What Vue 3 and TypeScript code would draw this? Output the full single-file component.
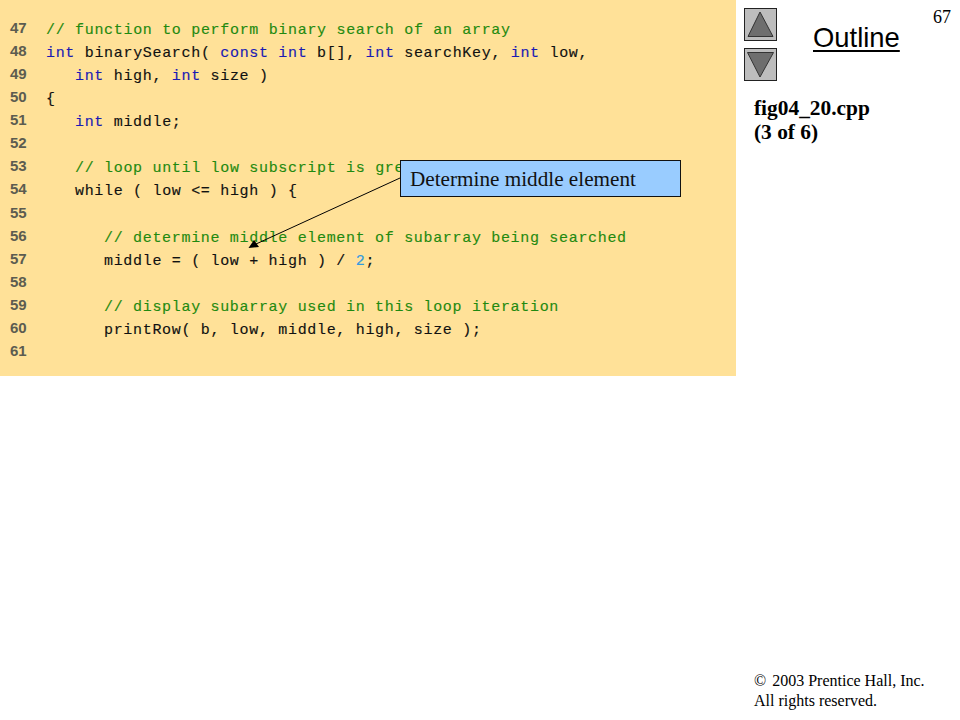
<script setup lang="ts">
type Seg = { t: string; c?: 'k' | 'g' | 'n' }
type Line = { n: number; indent: number; segs: Seg[] }
const lines: Line[] = [
  { n: 47, indent: 0, segs: [{ t: '// function to perform binary search of an array', c: 'g' }] },
  { n: 48, indent: 0, segs: [{ t: 'int', c: 'k' }, { t: ' binarySearch( ' }, { t: 'const int', c: 'k' }, { t: ' b[], ' }, { t: 'int', c: 'k' }, { t: ' searchKey, ' }, { t: 'int', c: 'k' }, { t: ' low,' }] },
  { n: 49, indent: 1, segs: [{ t: 'int', c: 'k' }, { t: ' high, ' }, { t: 'int', c: 'k' }, { t: ' size )' }] },
  { n: 50, indent: 0, segs: [{ t: '{' }] },
  { n: 51, indent: 1, segs: [{ t: 'int', c: 'k' }, { t: ' middle;' }] },
  { n: 52, indent: 0, segs: [] },
  { n: 53, indent: 1, segs: [{ t: '// loop until low subscript is greater than high subscript', c: 'g' }] },
  { n: 54, indent: 1, segs: [{ t: 'while ( low <= high ) {' }] },
  { n: 55, indent: 0, segs: [] },
  { n: 56, indent: 2, segs: [{ t: '// determine middle element of subarray being searched', c: 'g' }] },
  { n: 57, indent: 2, segs: [{ t: 'middle = ( low + high ) / ' }, { t: '2', c: 'n' }, { t: ';' }] },
  { n: 58, indent: 0, segs: [] },
  { n: 59, indent: 2, segs: [{ t: '// display subarray used in this loop iteration', c: 'g' }] },
  { n: 60, indent: 2, segs: [{ t: 'printRow( b, low, middle, high, size );' }] },
  { n: 61, indent: 0, segs: [] },
]
</script>

<template>
  <div class="slide">
    <main class="code">
      <div v-for="l in lines" :key="l.n" class="row">
        <span class="num">{{ l.n }}</span>
        <span class="src" :class="'ind' + l.indent"><span v-for="(s, i) in l.segs" :key="i" :class="s.c">{{ s.t }}</span></span>
      </div>
    </main>
    <aside class="side">
      <div class="top">
        <div class="nav">
          <button class="btn" aria-label="Previous">
            <svg width="31" height="31" viewBox="0 0 31 31"><path d="M15 3 L28 27.5 H3 Z" fill="#6e6e6e" stroke="#333" stroke-width="1" /></svg>
          </button>
          <button class="btn" aria-label="Next">
            <svg width="31" height="31" viewBox="0 0 31 31"><path d="M2.5 3.5 H28.5 L15 28 Z" fill="#6e6e6e" stroke="#333" stroke-width="1" /></svg>
          </button>
        </div>
        <div class="title">Outline</div>
        <div class="page">67</div>
      </div>
      <div class="file">fig04_20.cpp<br />(3 of 6)</div>
      <div class="copy"><span class="c">&copy;</span>2003 Prentice Hall, Inc.<br />All rights reserved.</div>
    </aside>
    <svg class="arrow" width="960" height="720" viewBox="0 0 960 720">
      <line x1="400" y1="178" x2="256" y2="244" stroke="#000" stroke-width="1" />
      <path d="M248.5 248 L254 240 L259 247 Z" fill="#000" />
    </svg>
    <div class="callout">Determine middle element</div>
  </div>
</template>

<style>
html, body { margin: 0; background: #fff; }
</style>

<style scoped>
.slide { position: relative; width: 960px; height: 720px; overflow: hidden; display: flex; background: #fff; }
.code { width: 736px; height: 376px; box-sizing: border-box; background: #ffe198; padding-top: 19px; flex: none; }
.row { display: flex; height: 23.07px; align-items: center; }
.num { width: 46px; box-sizing: border-box; padding-left: 10px; font: bold 15px/23px "Liberation Sans", sans-serif; color: #5c5c50; flex: none; margin-top: -6px; }
.src { font: 15px/23px "Liberation Mono", monospace; letter-spacing: 0.68px; white-space: pre; color: #111; -webkit-text-stroke: 0.15px currentColor; }
.ind1 { padding-left: 29px; }
.ind2 { padding-left: 58px; }
.k { color: #1a1ab4; }
.g { color: #1f8a10; }
.n { color: #2f9ae0; }
.side { flex: 1; position: relative; display: flex; flex-direction: column; padding: 8px 9px 9px 8px; box-sizing: border-box; font-family: "Liberation Serif", serif; color: #000; }
.top { display: flex; height: 88px; }
.nav { display: flex; flex-direction: column; gap: 7px; flex: none; }
.btn { width: 33px; height: 33px; padding: 0; margin: 0; border: 1px solid #222; background: #bdbdbd; display: block; }
.btn svg { display: block; }
.title { margin-left: 36px; margin-top: 14px; font: 27.4px/32px "Liberation Sans", sans-serif; text-decoration: underline; text-decoration-thickness: 2px; text-underline-offset: 3px; height: 32px; }
.page { margin-left: auto; font-size: 18px; line-height: 18px; }
.file { margin-left: 10px; font-weight: bold; font-size: 21.4px; line-height: 24px; }
.copy { margin-top: auto; margin-left: 10px; font-size: 16px; line-height: 20px; }
.c { margin-right: 6px; }
.arrow { position: absolute; left: 0; top: 0; pointer-events: none; }
.callout { position: absolute; left: 400px; top: 160px; width: 281px; height: 37px; box-sizing: border-box; border: 1px solid #111; background: #99ccff; padding-left: 9px; font: 21.2px/36px "Liberation Serif", serif; color: #111; white-space: nowrap; }
</style>
